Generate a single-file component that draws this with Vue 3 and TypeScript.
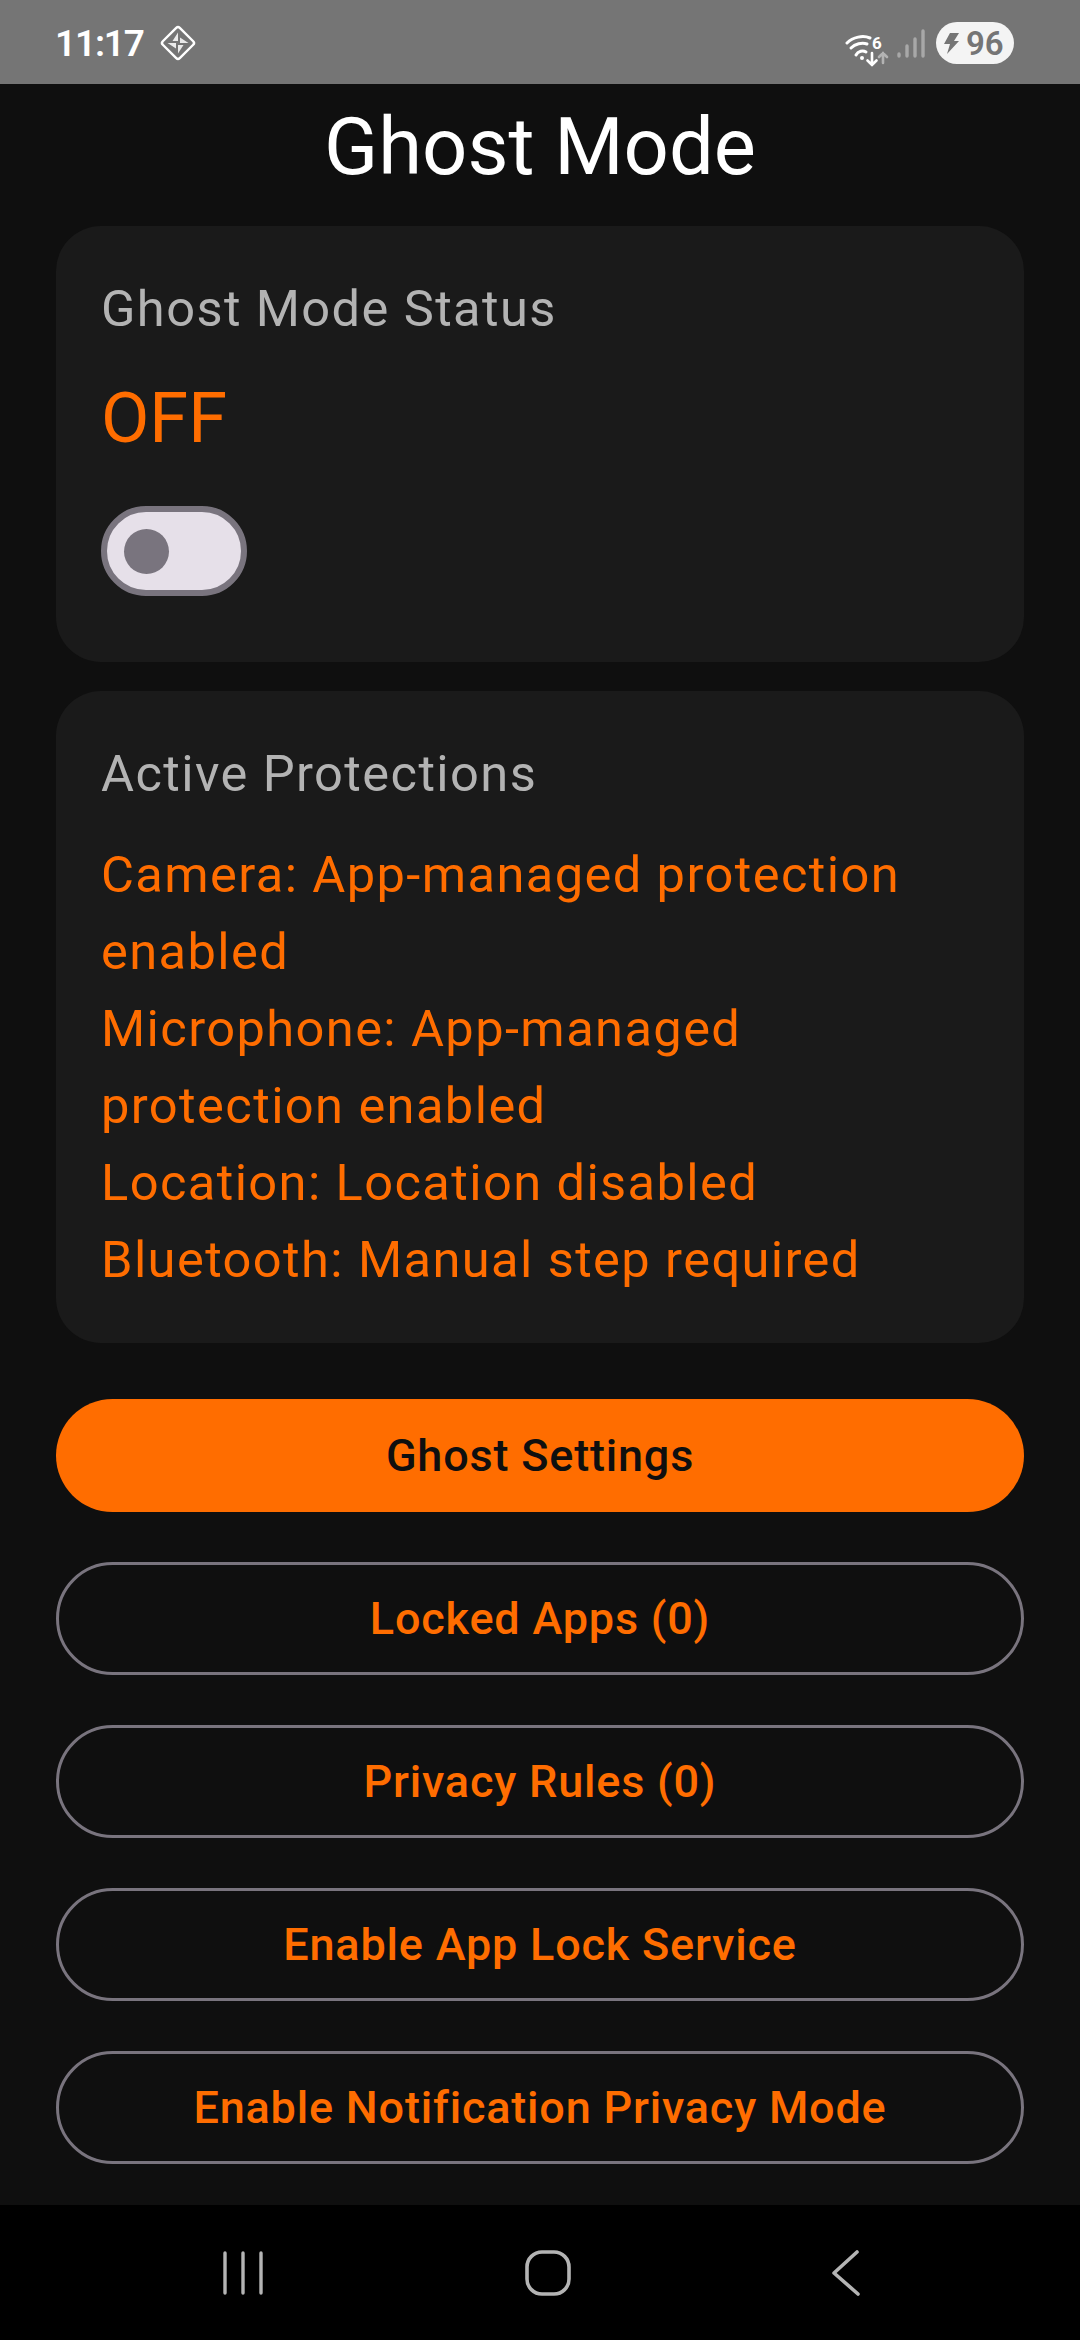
<script setup lang="ts">
const protections: string[] = [
  "Camera: App-managed protection enabled",
  "Microphone: App-managed protection enabled",
  "Location: Location disabled",
  "Bluetooth: Manual step required",
];

const outlinedButtons: string[] = [
  "Locked Apps (0)",
  "Privacy Rules (0)",
  "Enable App Lock Service",
  "Enable Notification Privacy Mode",
];
</script>

<template>
  <div class="screen">
    <header class="status-bar">
      <div class="status-left">
        <span class="clock">11:17</span>
        <svg class="diamond" width="40" height="40" viewBox="0 0 40 40" fill="none">
          <rect x="8" y="8" width="24" height="24" rx="2.5" transform="rotate(45 20 20)" stroke="#fff" stroke-width="2.4" />
          <path d="M20 9.5 L20 18 L14.5 18 Z M30.5 20 L22 20 L22 14.5 Z M20 30.5 L20 22 L25.5 22 Z M9.5 20 L18 20 L18 25.5 Z" fill="#fff" opacity="0.85" />
        </svg>
      </div>
      <div class="status-right">
        <svg class="wifi" width="46" height="46" viewBox="0 0 46 46" fill="none" stroke="#fff" stroke-linecap="round">
          <path d="M2 21 C8 15 18 13 25 16" stroke-width="3" />
          <path d="M6 26 C10 22 17 20 22 22" stroke-width="3" />
          <path d="M11 33 C13 29 18 28 21 30" stroke-width="3" />
          <circle cx="17" cy="36" r="2" fill="#fff" stroke="none" />
          <path d="M27 31 V43 M22.5 38.5 L27 43 L31.5 38.5" stroke-width="2.6" />
          <path d="M38 41 V31 M34 35 L38 31 L42 35" stroke-width="2.6" opacity="0.45" />
          <text x="27" y="27" class="wifi-six">6</text>
        </svg>
        <svg class="signal" width="28" height="30" viewBox="0 0 28 30" fill="none" stroke="#a8a8a8" stroke-width="3.4" stroke-linecap="round">
          <path d="M2 27 V25 M10 27 V17 M18 27 V10 M26 27 V2" />
        </svg>
        <div class="battery">
          <svg width="15" height="21" viewBox="0 0 15 21">
            <path d="M6 0 H15 L10 8 H15 L3 21 L6 11 H0 Z" fill="#757575" />
          </svg>
          <span>96</span>
        </div>
      </div>
    </header>

    <main class="content">
      <h1 class="title">Ghost Mode</h1>

      <section class="card status-card">
        <h2 class="card-label">Ghost Mode Status</h2>
        <p class="status-value">OFF</p>
        <div class="switch"><span class="thumb"></span></div>
      </section>

      <section class="card protections-card">
        <h2 class="card-label">Active Protections</h2>
        <div class="protection-list">
          <p v-for="item in protections" :key="item">{{ item }}</p>
        </div>
      </section>

      <div class="actions">
        <button class="btn btn-filled">Ghost Settings</button>
        <button v-for="label in outlinedButtons" :key="label" class="btn btn-outline">{{ label }}</button>
      </div>
    </main>

    <nav class="nav-bar">
      <svg width="44" height="46" viewBox="0 0 44 46" stroke="#b4b4b4" stroke-width="3.4" stroke-linecap="round">
        <path d="M4 3 V43 M22 3 V43 M40 3 V43" />
      </svg>
      <svg width="46" height="46" viewBox="0 0 46 46" fill="none" stroke="#b4b4b4" stroke-width="3.6">
        <rect x="2" y="2" width="42" height="42" rx="15" />
      </svg>
      <svg width="30" height="46" viewBox="0 0 30 46" fill="none" stroke="#b4b4b4" stroke-width="3.6" stroke-linecap="round" stroke-linejoin="round">
        <path d="M26 2 L3 23 L27 44" />
      </svg>
    </nav>
  </div>
</template>

<style scoped>
.screen {
  width: 1080px;
  height: 2340px;
  display: flex;
  flex-direction: column;
  background: #0f0f0f;
  font-family: Roboto, "Noto Sans", sans-serif;
  overflow: hidden;
}

.status-bar {
  height: 84px;
  flex: none;
  display: flex;
  align-items: center;
  justify-content: space-between;
  padding: 0 66px 0 55px;
  background: #757575;
  color: #fff;
}

.status-left,
.status-right {
  display: flex;
  align-items: center;
}

.clock {
  font-size: 37px;
  font-weight: 600;
  line-height: 1;
  letter-spacing: -1.2px;
  margin-top: 2px;
}

.diamond {
  margin-left: 14px;
  margin-top: 2px;
}

.wifi {
  margin-top: 6px;
}

.wifi-six {
  font-family: Roboto, sans-serif;
  font-size: 17px;
  font-weight: 700;
  fill: #fff;
  stroke: none;
}

.signal {
  margin-left: 6px;
  margin-top: 4px;
}

.battery {
  display: flex;
  align-items: center;
  gap: 7px;
  width: 78px;
  height: 42px;
  margin-left: 11px;
  margin-top: 2px;
  padding-left: 8px;
  box-sizing: border-box;
  border-radius: 21px;
  background: #f4f4f4;
  color: #757575;
  font-size: 33px;
  font-weight: 600;
}

.content {
  flex: 1;
  padding: 10px 56px 0;
}

.title {
  margin: 0 0 27px;
  font-size: 79.5px;
  font-weight: 400;
  line-height: 105px;
  text-align: center;
  color: #fff;
}

.card {
  padding: 45px;
  border-radius: 45px;
  background: #1a1a1a;
}

.card-label {
  margin: 0;
  font-size: 50.6px;
  font-weight: 400;
  line-height: 76px;
  letter-spacing: 1.4px;
  color: #b3b3b3;
}

.status-card {
  padding-bottom: 66px;
}

.status-value {
  margin: 26px 0 43px;
  font-size: 70.3px;
  line-height: 90px;
  color: #ff6d00;
}

.switch {
  width: 146px;
  height: 90px;
  box-sizing: border-box;
  display: flex;
  align-items: center;
  padding-left: 17px;
  border: 6px solid #79747e;
  border-radius: 45px;
  background: #e6e0e9;
}

.thumb {
  width: 45px;
  height: 45px;
  border-radius: 50%;
  background: #79747e;
}

.protections-card {
  margin-top: 29px;
}

.protection-list {
  margin-top: 24px;
}

.protection-list p {
  margin: 0;
  font-size: 50.6px;
  line-height: 77px;
  letter-spacing: 1.4px;
  color: #ff6d00;
}

.actions {
  display: flex;
  flex-direction: column;
  gap: 50px;
  margin-top: 56px;
}

.btn {
  height: 113px;
  border-radius: 57px;
  font-family: inherit;
  font-size: 45px;
  font-weight: 500;
  letter-spacing: 0.8px;
}

.btn-filled {
  border: none;
  background: #ff6d00;
  color: #0f0f0f;
}

.btn-outline {
  border: 3px solid #79747e;
  background: transparent;
  color: #ff6d00;
}

.nav-bar {
  height: 135px;
  flex: none;
  display: flex;
  align-items: center;
  justify-content: space-between;
  padding: 0 219px 0 221px;
  background: #000;
}
</style>
